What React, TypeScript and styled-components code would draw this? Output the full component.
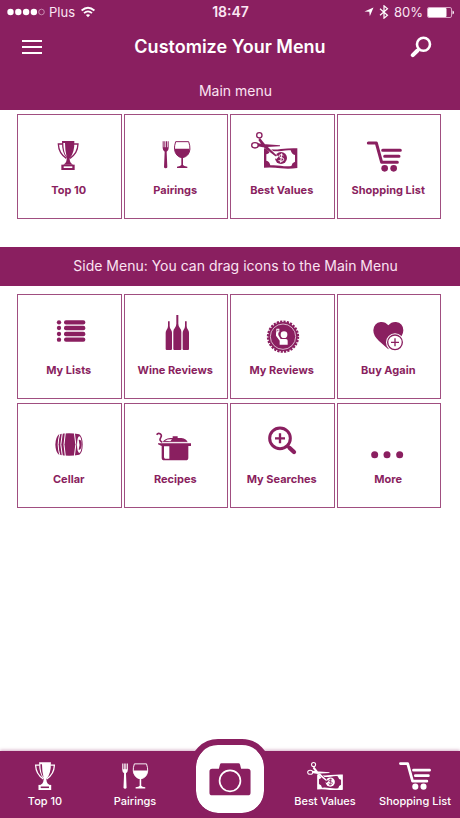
import React from "react";
import styled, { createGlobalStyle } from "styled-components";

const WINE = "#8a1f60";

const GlobalStyle = createGlobalStyle`
  *, *::before, *::after { box-sizing: border-box; }
  body {
    margin: 0;
    background: #fff;
    font-family: Inter, "Liberation Sans", sans-serif;
  }
  button { font: inherit; cursor: pointer; }
`;

const Page = styled.div`
  display: flex;
  flex-direction: column;
  min-height: 100vh;
  background: #fff;
`;

const StatusBar = styled.div`
  display: grid;
  grid-template-columns: 1fr auto 1fr;
  align-items: center;
  height: 24px;
  padding: 0 6px 0 7px;
  background: ${WINE};
  color: #fbe6f3;
  font-size: 13px;
  line-height: 24px;
`;

const StatusGroup = styled.div<{ $end?: boolean }>`
  display: flex;
  align-items: center;
  justify-content: ${(p) => (p.$end ? "flex-end" : "flex-start")};
  gap: 4px;
`;

const Clock = styled.time`
  font-size: 14px;
  font-weight: 600;
`;

const Header = styled.header`
  display: grid;
  grid-template-columns: 44px 1fr 44px;
  align-items: center;
  height: 46px;
  padding: 0 17px 0 10px;
  background: ${WINE};
  color: #fff;
`;

const Title = styled.h1`
  margin: 0;
  padding-left: 7px;
  font-size: 18px;
  font-weight: 600;
  line-height: 24px;
  text-align: center;
  white-space: nowrap;
`;

const IconButton = styled.button`
  display: flex;
  align-items: center;
  justify-content: center;
  height: 44px;
  padding: 0;
  border: 0;
  background: none;
  color: #fff;
`;

const Band = styled.h2<{ $spaced?: boolean }>`
  margin: ${(p) => (p.$spaced ? "28px" : "0")} 0 0;
  padding: ${(p) => (p.$spaced ? "0 0 1px 11px" : "2px 0 0 11px")};
  background: ${WINE};
  color: #fbe3f2;
  font-size: 14px;
  font-weight: 400;
  line-height: 38px;
  text-align: center;
`;

const Main = styled.main`
  flex: 1;
`;

const TileGrid = styled.div<{ $top: number }>`
  display: grid;
  grid-template-columns: repeat(4, 1fr);
  gap: 4px 2px;
  padding: ${(p) => p.$top}px 19px 0 17px;
`;

const Tile = styled.button`
  display: flex;
  flex-direction: column;
  align-items: center;
  gap: 3px;
  height: 105px;
  padding: 12px 1px 0 0;
  border: 1px solid #a04e80;
  background: #fff;
  color: ${WINE};
`;

const TileIcon = styled.svg`
  --cut: #fff;
  width: 70px;
  height: 52px;
  flex: none;
`;

const TileLabel = styled.span`
  font-size: 11px;
  font-weight: 700;
  line-height: 16px;
  white-space: nowrap;
`;

const TabBar = styled.nav`
  display: grid;
  grid-template-columns: 1fr 1fr 100px 1fr 1fr;
  height: 67px;
  background: ${WINE};
  color: #fff;
  box-shadow: 0 -1px 3px rgba(138, 31, 96, 0.35);
`;

const Tab = styled.button`
  display: flex;
  flex-direction: column;
  align-items: center;
  gap: 4px;
  padding: 11px 0 0;
  border: 0;
  background: none;
  color: #fff;
`;

const TabIcon = styled.svg`
  --cut: ${WINE};
  width: 44px;
  height: 28px;
  flex: none;
`;

const TabLabel = styled.span`
  font-size: 11px;
  font-weight: 500;
  line-height: 14px;
  white-space: nowrap;
`;

const CameraButton = styled.button`
  display: flex;
  align-items: center;
  justify-content: center;
  justify-self: center;
  width: 80px;
  height: 80px;
  margin-top: -12px;
  padding: 0;
  border: 6px solid ${WINE};
  border-radius: 28px;
  background: #fff;
  background-clip: padding-box;
  color: ${WINE};
`;

const cut = "var(--cut)";

const Trophy = () => (
  <g>
    <path d="M158 108H145q1 28 24 43M191 108h13q-1 28-24 43" fill="none" stroke="currentColor" strokeWidth="4" />
    <path d="M156 99h37q1 37-14 52l-4 5-4-5q-16-15-15-52z" fill="currentColor" />
    <path d="M160 105q0 28 10 42-5-20-5-42z" fill={cut} />
    <path d="M171 148h7l2 12q1 6 9 10h-29q8-4 9-10z" fill="currentColor" />
    <path d="M154 170h40v16h-40z" fill="currentColor" />
    <path d="M161 175h26v5h-26z" fill={cut} />
  </g>
);

const Pairings = () => (
  <g>
    <path d="M460 100h3v18h2v-18h3v18h2v-18h3v18h2v-18h3v20q0 8-6 11l2 47q-1 3-5 3t-5-3l2-47q-6-3-6-11z" fill="currentColor" />
    <path d="M499 101h39q9 26-3 40-6 7-16 7t-16-7q-13-14-4-40z" fill="none" stroke="currentColor" strokeWidth="3" />
    <path d="M496 122h45q0 16-11 23-5 4-9 5v21q2 4 13 5v4h-31v-4q11-1 13-5v-21q-6-1-10-5-10-8-10-23z" fill="currentColor" />
  </g>
);

const Values = () => (
  <g>
    <path d="M117 121q25 6 51 2 26-3 49-2v59q-24 4-50 1-25-4-50-2z" fill="currentColor" />
    <path d="M136 129q17 2 34 0 15-3 27-2 3 12 13 14v20q-9 3-11 13-15 2-32-1-16-2-31-1-2-12-12-14v-19q10-2 12-12z" fill={cut} />
    <circle cx="168" cy="150" r="18" fill="currentColor" />
    <path d="M175 143q-3-4-8-3-6 1-5 5t8 4q7 1 6 6-2 6-8 5-5 0-7-4M170 136l-3 28" fill="none" stroke={cut} strokeWidth="3" />
    <path d="m105 86 12 22 40 42" fill="none" stroke={cut} strokeWidth="10" />
    <path d="m105 90 9 11 6 8 37 35-6 1-36-28-15-21zM99 106l14 2 52 4v3l-51 3-16-3z" fill="currentColor" />
    <ellipse cx="103" cy="82" rx="8" ry="8" fill="none" stroke="currentColor" strokeWidth="4" />
    <ellipse cx="90" cy="112" rx="10" ry="8" fill="none" stroke="currentColor" strokeWidth="4" />
  </g>
);

const Cart = () => (
  <g>
    <g fill="none" stroke="currentColor" strokeLinecap="round" strokeLinejoin="round">
      <path d="M432 105h24l16 58h47" strokeWidth="9" />
      <path d="M475 127h53M481 145h43" strokeWidth="9" />
    </g>
    <circle cx="481" cy="181" r="10" fill="currentColor" />
    <circle cx="508" cy="181" r="10" fill="currentColor" />
  </g>
);

const Lists = () => (
  <g fill="currentColor">
    {[97, 114, 132, 149].map((y) => (
      <g key={y}>
        <circle cx="147" cy={y} r="6.5" />
        <rect x="162" y={y - 6.5} width="64" height="13" rx="6" />
      </g>
    ))}
  </g>
);

const Bottles = () => (
  <g fill="currentColor">
    <path d="M501 75h6v26q0 8 5 14 4 4 4 10v52q0 3-3 3h-18q-3 0-3-3v-52q0-6 4-10 5-6 5-14z" />
    <path d="M476 94h5v14q0 6 4 11 3 4 3 9v49q0 3-3 3h-13q-3 0-3-3v-49q0-5 3-9 4-5 4-11z" />
    <path d="M527 94h5v14q0 6 4 11 3 4 3 9v49q0 3-3 3h-13q-3 0-3-3v-49q0-5 3-9 4-5 4-11z" />
  </g>
);

const Badge = () => (
  <g>
    <circle cx="174" cy="140" r="44" fill="currentColor" />
    <circle cx="174" cy="140" r="45" fill="none" stroke="currentColor" strokeWidth="7" strokeDasharray="6.5 3.6" />
    <circle cx="174" cy="140" r="38" fill="none" stroke={cut} strokeWidth="2" />
    <circle cx="177" cy="134" r="10" fill={cut} />
    <path d="M154 116h9v10l-3 2v7l7 12h16q5 0 5 5v12h-24v-12l-11-15v-9l1-2z" fill={cut} />
    <path d="M157 119h3v5h-3z" fill="currentColor" />
  </g>
);

const Heart = () => (
  <g>
    <path d="M492 106q9-11 23-10 21 2 22 25 0 17-20 34l-25 23-28-25q-17-15-17-32 2-23 22-25 14-1 23 10z" fill="currentColor" />
    <circle cx="512" cy="157" r="27" fill={cut} />
    <circle cx="512" cy="157" r="22" fill={cut} stroke="currentColor" strokeWidth="4" />
    <path d="M512 145v24M500 157h24" stroke="currentColor" strokeWidth="4" />
  </g>
);

const Barrel = () => (
  <g>
    <path d="M147 103q30-6 61 0 10 8 10 31t-10 30q-31 6-61 0-10-7-11-30 1-23 11-31z" fill="currentColor" />
    <path d="M150 100q-11 34 0 67M157 99q-9 35 0 69M166 98q-8 36 0 71M193 98q9 36 0 71" fill="none" stroke={cut} strokeWidth="3" />
    <ellipse cx="208" cy="134" rx="7" ry="25" fill={cut} />
    <path d="M206 119q5 15 0 30 8 1 9-15t-9-15z" fill="currentColor" />
  </g>
);

const Pot = () => (
  <g>
    <path d="M442 104q4-6 10-3 7 4 2 12-6 9 5 14" fill="none" stroke="currentColor" strokeWidth="5" />
    <path d="M446 130h99v8h-8v35q0 8-8 8h-64q-8 0-8-8v-35l-11-5z" fill="currentColor" />
    <path d="M460 127q4-11 23-13h7v-5h15v5h11q16 2 19 13z" fill="currentColor" />
    <path d="M467 122q8-5 21-4l-5 6zM468 139h12v37h-12q-4 0-4-5v-32z" fill={cut} />
    <path d="M459 127h76" stroke={cut} strokeWidth="2" />
  </g>
);

const ZoomIn = () => (
  <g fill="none" stroke="currentColor">
    <circle cx="165" cy="115" r="31" strokeWidth="9" />
    <path d="M165 100v30M150 115h30" strokeWidth="7" />
    <path d="m187 137 6 6" strokeWidth="9" />
    <path d="m194 144 13 12" strokeWidth="13" strokeLinecap="round" />
  </g>
);

const Dots = () => (
  <g fill="currentColor">
    <circle cx="451" cy="164" r="10.5" />
    <circle cx="488" cy="164" r="10.5" />
    <circle cx="526" cy="164" r="10.5" />
  </g>
);

type Item = { label: string; Art: () => React.ReactElement; box: string };

const mainItems: Item[] = [
  { label: "Top 10", Art: Trophy, box: "72 57 210 156" },
  { label: "Pairings", Art: Pairings, box: "392 57 210 156" },
  { label: "Best Values", Art: Values, box: "66 57 210 156" },
  { label: "Shopping List", Art: Cart, box: "386 57 210 156" },
];

const sideItems: Item[] = [
  { label: "My Lists", Art: Lists, box: "72 51 210 156" },
  { label: "Wine Reviews", Art: Bottles, box: "392 51 210 156" },
  { label: "My Reviews", Art: Badge, box: "66 51 210 156" },
  { label: "Buy Again", Art: Heart, box: "386 51 210 156" },
  { label: "Cellar", Art: Barrel, box: "72 48 210 156" },
  { label: "Recipes", Art: Pot, box: "392 48 210 156" },
  { label: "My Searches", Art: ZoomIn, box: "66 48 210 156" },
  { label: "More", Art: Dots, box: "386 48 210 156" },
];

const leftTabs: Item[] = [
  { label: "Top 10", Art: Trophy, box: "142 98 65 88" },
  { label: "Pairings", Art: Pairings, box: "459 95 84 90" },
];

const rightTabs: Item[] = [
  { label: "Best Values", Art: Values, box: "78 72 139 109" },
  { label: "Shopping List", Art: Cart, box: "427 100 106 92" },
];

const Tiles = ({ items, top }: { items: Item[]; top: number }) => (
  <TileGrid $top={top}>
    {items.map(({ label, Art, box }) => (
      <Tile key={label} type="button">
        <TileIcon viewBox={box} aria-hidden="true">
          <Art />
        </TileIcon>
        <TileLabel>{label}</TileLabel>
      </Tile>
    ))}
  </TileGrid>
);

const Tabs = ({ items }: { items: Item[] }) => (
  <>
    {items.map(({ label, Art, box }) => (
      <Tab key={label} type="button">
        <TabIcon viewBox={box} aria-hidden="true">
          <Art />
        </TabIcon>
        <TabLabel>{label}</TabLabel>
      </Tab>
    ))}
  </>
);

export default function App() {
  return (
    <Page>
      <GlobalStyle />
      <StatusBar>
        <StatusGroup>
          <svg width="38" height="8" viewBox="0 0 38 8" aria-hidden="true">
            {[3.5, 11.3, 19.1, 26.9].map((x) => (
              <circle key={x} cx={x} cy="4" r="3.2" fill="#fff" />
            ))}
            <circle cx="34.5" cy="4" r="2.8" fill="none" stroke="#e0b5cf" strokeWidth="0.7" />
          </svg>
          <span>Plus</span>
          <svg width="18" height="12" viewBox="1 0 18 12" aria-hidden="true">
            <g fill="none" stroke="#fff" strokeWidth="1.8">
              <path d="M3.6 4.5q6.4-5.6 12.8 0" />
              <path d="M6 7.2q4-3.6 8 0" />
            </g>
            <path d="m7.9 9 2.1 2.2L12.1 9q-2.1-1.7-4.2 0z" fill="#fff" />
          </svg>
        </StatusGroup>
        <Clock>18:47</Clock>
        <StatusGroup $end>
          <svg width="10" height="10" viewBox="0 0 10 10" aria-hidden="true">
            <path d="M9.5.5 5.8 9.3 5.3 4.8.5 4.5z" fill="#fff" />
          </svg>
          <svg width="12" height="14" viewBox="0 0 12 14" aria-hidden="true">
            <path d="m2 3.8 7.5 6.4L6 13.2V.8l3.5 3L2 10.2" fill="none" stroke="#fff" strokeWidth="1.2" />
          </svg>
          <span>80%</span>
          <svg width="27" height="11" viewBox="0 0 27 11" aria-hidden="true">
            <rect x=".5" y=".5" width="24" height="10" rx="1.5" fill="none" stroke="#d9a5c5" />
            <rect x="1" y="1" width="18.5" height="9" rx="1" fill="#fff" />
            <path d="M25.5 3.5q1.5.5 1.5 2t-1.5 2z" fill="#fff" />
          </svg>
        </StatusGroup>
      </StatusBar>
      <Header>
        <IconButton type="button" aria-label="Open menu">
          <svg width="20" height="14" viewBox="0 0 20 14" aria-hidden="true">
            <path d="M0 1h20M0 7h20M0 13h20" stroke="#fff" strokeWidth="2" />
          </svg>
        </IconButton>
        <Title>Customize Your Menu</Title>
        <IconButton type="button" aria-label="Search">
          <svg width="22" height="22" viewBox="0 0 22 22" aria-hidden="true">
            <circle cx="13.5" cy="8.3" r="6.5" fill="none" stroke="#fff" strokeWidth="2.6" />
            <path d="m9 13-1.500 1.500" stroke="#fff" strokeWidth="3" />
            <path d="m7.500 14.500-4.700 4.700" stroke="#fff" strokeWidth="4" strokeLinecap="round" />
          </svg>
        </IconButton>
      </Header>
      <Main>
        <Band>Main menu</Band>
        <Tiles items={mainItems} top={4} />
        <Band $spaced>Side Menu: You can drag icons to the Main Menu</Band>
        <Tiles items={sideItems} top={8} />
      </Main>
      <TabBar>
        <Tabs items={leftTabs} />
        <CameraButton type="button" aria-label="Scan a label">
          <svg width="42" height="33" viewBox="117 81 124 98" aria-hidden="true">
            <path d="M126 98h20l3-12q1-4 5-4h50q4 0 5 4l3 12h20q8 0 8 8v63q0 8-8 8H126q-8 0-8-8v-63q0-8 8-8z" fill="currentColor" />
            <circle cx="179" cy="134" r="31" fill="none" stroke="#fff" strokeWidth="5" />
          </svg>
        </CameraButton>
        <Tabs items={rightTabs} />
      </TabBar>
    </Page>
  );
}
